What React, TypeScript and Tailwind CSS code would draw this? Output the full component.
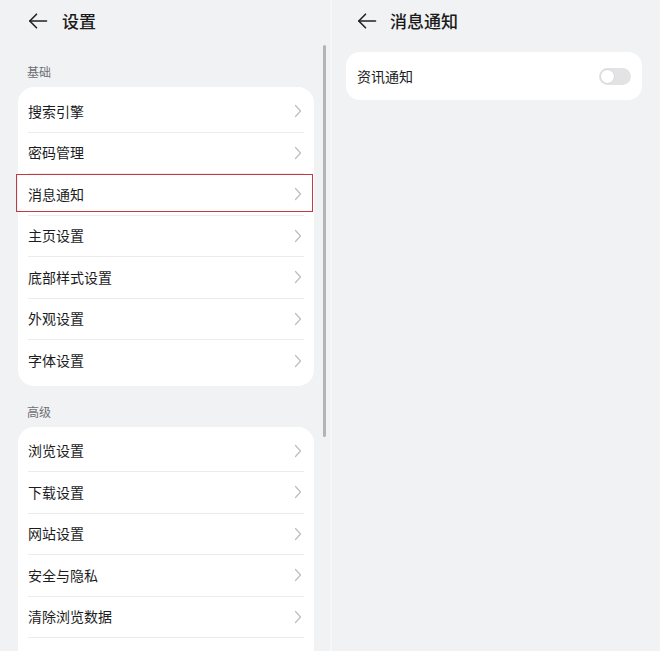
import React from 'react';

const basic = ['搜索引擎', '密码管理', '消息通知', '主页设置', '底部样式设置', '外观设置', '字体设置'];
const advanced = ['浏览设置', '下载设置', '网站设置', '安全与隐私', '清除浏览数据', ''];

const BackArrow = () => (
  <svg width="20" height="20" viewBox="0 0 20 20" fill="none" stroke="#222" strokeWidth="1.6" strokeLinecap="round" strokeLinejoin="round">
    <path d="M18.5 10H1.8" />
    <path d="M8.5 3.2L1.8 10l6.7 6.8" />
  </svg>
);

const Chevron = () => (
  <svg width="8" height="14" viewBox="0 0 8 14" fill="none" stroke="#bdbdc0" strokeWidth="1.2" strokeLinecap="round" strokeLinejoin="round">
    <path d="M1.5 1.5L6.5 7l-5 5.5" />
  </svg>
);

const Row: React.FC<{ label: string; last?: boolean; marked?: boolean }> = ({ label, last, marked }) => (
  <div className="relative h-[41.5px] pl-[10px]">
    <div className={`h-full flex items-center justify-between pr-[2px] mr-[10px] ${last ? '' : 'border-b border-[#ececee]'}`}>
      <span className="text-[14px] text-[#1c1c1e]">{label}</span>
      {label && <Chevron />}
    </div>
    {marked && (
      <div className="absolute top-0 left-[-2px] right-[1px] h-[38px] border-[1.5px] border-[#c23a44]" />
    )}
  </div>
);

export default function App() {
  return (
    <div
      className="w-[660px] h-[651px] overflow-hidden flex bg-[#f1f2f4]"
      style={{ fontFamily: '"Noto Sans CJK SC", "Noto Sans", sans-serif' }}
    >
      {/* left: settings list */}
      <div className="relative w-[330px] shrink-0">
        <div className="h-[42px] flex items-center pl-[28px] gap-[14px]">
          <BackArrow />
          <span className="text-[17px] font-medium text-[#1a1a1a]">设置</span>
        </div>
        <div className="pl-[18px] w-[314px]">
          <div className="h-[45px] flex items-end pb-[6px] pl-[9px] text-[12px] text-[#6f6f74]">基础</div>
          <div className="bg-white rounded-[16px] py-[4px]">
            {basic.map((b, i) => (
              <Row key={b} label={b} last={i === basic.length - 1} marked={b === '消息通知'} />
            ))}
          </div>
          <div className="h-[41px] flex items-end pb-[6px] pl-[9px] text-[12px] text-[#6f6f74]">高级</div>
          <div className="bg-white rounded-t-[16px] pt-[4px]">
            {advanced.map((b, i) => (
              <Row key={i} label={b} />
            ))}
          </div>
        </div>
        {/* scrollbar */}
        <div className="absolute left-[323px] top-[45px] w-[3px] h-[392px] rounded-full bg-[#b4b4b7]" />
      </div>

      <div className="w-[2px] bg-[#f7f7f8]" />

      {/* right: notification settings */}
      <div className="flex-1">
        <div className="h-[42px] flex items-center pl-[25px] gap-[13px]">
          <BackArrow />
          <span className="text-[17px] font-medium text-[#1a1a1a]">消息通知</span>
        </div>
        <div className="mt-[10px] ml-[14px] w-[296px] h-[48px] bg-white rounded-[14px] flex items-center justify-between pl-[11px] pr-[11px]">
          <span className="text-[14px] text-[#1c1c1e]">资讯通知</span>
          <div className="w-[32px] h-[17px] rounded-full bg-[#e3e3e5] flex items-center pl-[1px]">
            <div className="w-[15px] h-[15px] rounded-full bg-white border border-[#d6d6d8]" />
          </div>
        </div>
      </div>
    </div>
  );
}
